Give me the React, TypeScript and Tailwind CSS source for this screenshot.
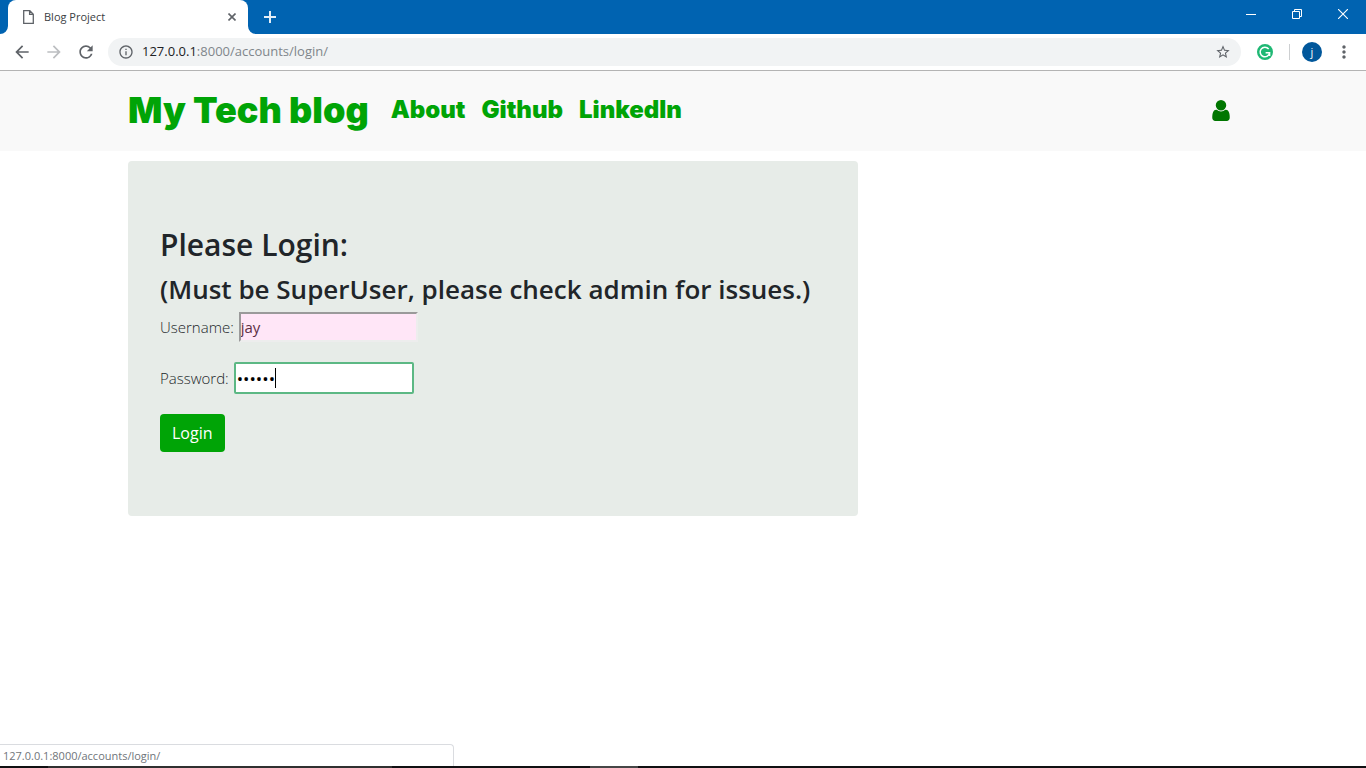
import type { ReactNode } from "react";
import {
  MdArrowBack,
  MdArrowForward,
  MdInfoOutline,
  MdMoreVert,
  MdRefresh,
  MdStarBorder,
} from "react-icons/md";

const links = ["About", "Github", "LinkedIn"];

function WindowButton({ label, children }: { label: string; children: ReactNode }) {
  return (
    <button aria-label={label} className="flex h-7 w-[46px] items-center justify-center text-white">
      {children}
    </button>
  );
}

function TabFlare({ flip = false }: { flip?: boolean }) {
  return (
    <svg viewBox="0 0 8 8" className={flip ? "size-2 -scale-x-100 fill-white" : "size-2 fill-white"}>
      <path d="M8 0V8H0A8 8 0 0 0 8 0Z" />
    </svg>
  );
}

function TitleBar() {
  return (
    <div className="flex h-[34px] bg-[#0063b1]">
      <div className="flex items-end">
        <TabFlare />
        <div className="flex h-full w-60 items-center rounded-t-lg bg-white pr-2.5 pl-[15px]">
          <svg viewBox="0 0 11 14" className="h-3.5 w-[11px] fill-none stroke-[#5f6368] stroke-[1.3]">
            <path d="M.7.7H6.8L10.3 4.2V13.3H.7ZM6.6.7V4.4H10.3" />
          </svg>
          <span className="ml-2.5 grow text-[11px] text-[#3c4043]">Blog Project</span>
          <button aria-label="Close tab" className="flex size-3 items-center justify-center">
            <svg viewBox="0 0 8 8" className="size-2 stroke-[#5f6368] stroke-[1.6]">
              <path d="M.5.5 7.5 7.5M7.5.5.5 7.5" />
            </svg>
          </button>
        </div>
        <TabFlare flip />
      </div>
      <button aria-label="New tab" className="flex w-7 items-center justify-center">
        <svg viewBox="0 0 12 12" className="size-3 stroke-[#e4eef7] stroke-2">
          <path d="M6 0V12M0 6H12" />
        </svg>
      </button>
      <div className="ml-auto flex">
        <WindowButton label="Minimize">
          <svg viewBox="0 0 10 10" className="size-2.5 fill-current">
            <path d="M0 5H10V6H0Z" />
          </svg>
        </WindowButton>
        <WindowButton label="Restore">
          <svg viewBox="0 0 10 10" className="size-2.5 fill-none stroke-current">
            <path d="M.5 2.5H7.5V9.5H.5ZM2.5 2.5V.5H9.5V7.5H7.5" />
          </svg>
        </WindowButton>
        <WindowButton label="Close">
          <svg viewBox="0 0 10 10" className="size-2.5 stroke-current stroke-[1.1]">
            <path d="M0 0 10 10M10 0 0 10" />
          </svg>
        </WindowButton>
      </div>
    </div>
  );
}

function Toolbar() {
  return (
    <div className="flex h-[37px] items-center border-b border-[#b4b4b4] bg-white px-3 text-[#5f6368]">
      <button aria-label="Back">
        <MdArrowBack className="size-5" />
      </button>
      <button aria-label="Forward" className="ml-3 text-[#bcbec1]">
        <MdArrowForward className="size-5" />
      </button>
      <button aria-label="Reload" className="ml-3">
        <MdRefresh className="size-5" />
      </button>
      <div className="ml-3 flex h-7 grow items-center rounded-full bg-[#f1f3f4] px-2.5">
        <MdInfoOutline className="size-4" />
        <span className="ml-2 grow text-[13px] text-[#80868b]">
          <span className="text-[#202124]">127.0.0.1</span>:8000/accounts/login/
        </span>
        <button aria-label="Bookmark this page">
          <MdStarBorder className="size-4" />
        </button>
      </div>
      <button aria-label="Grammarly" className="ml-4">
        <svg viewBox="0 0 16 16" className="size-4">
          <circle cx="8" cy="8" r="8" fill="#1fb874" />
          <path
            d="M11.7 5A4.8 4.8 0 1 0 12.7 8.6M8.6 8.7H12.6V12"
            fill="none"
            stroke="#fff"
            strokeWidth="1.5"
          />
        </svg>
      </button>
      <div className="ml-4 h-4 w-px bg-[#cdcfd1]" />
      <button
        aria-label="Profile"
        className="ml-3 flex size-5 items-center justify-center rounded-full bg-[#01579b] text-[11px] text-white"
      >
        j
      </button>
      <button aria-label="Menu" className="ml-3">
        <MdMoreVert className="size-5" />
      </button>
    </div>
  );
}

function SiteHeader() {
  return (
    <header className="bg-[#f9f9f9]">
      <div className="mx-auto flex h-20 max-w-[1110px] items-center pb-0.5 font-[Inter,sans-serif] font-black text-[#00a406]">
        <a href="#home" className="text-4xl leading-none">
          My Tech blog
        </a>
        <nav className="ml-[22px] flex gap-4 text-2xl leading-none">
          {links.map((link) => (
            <a key={link} href={`#${link.toLowerCase()}`}>
              {link}
            </a>
          ))}
        </nav>
        <a href="#account" aria-label="Account" className="mr-2 ml-auto">
          <svg viewBox="0 128 1280 1536" className="block h-[21px] w-[18px] fill-[#007600]">
            <path d="M1280 1399q0 109-62.5 187t-150.5 78h-854q-88 0-150.5-78t-62.5-187q0-85 8.5-160.5t31.5-152 58.5-131 94-89 134.5-34.5q131 128 313 128t313-128q76 0 134.5 34.5t94 89 58.5 131 31.5 152 8.5 160.5zm-256-887q0 159-112.5 271.5t-271.5 112.5-271.5-112.5-112.5-271.5 112.5-271.5 271.5-112.5 271.5 112.5 112.5 271.5z" />
          </svg>
        </a>
      </div>
    </header>
  );
}

function LoginCard() {
  return (
    <section className="max-w-[730px] rounded bg-[#e7ece8] px-8 py-16 text-[#212529]">
      <h2 className="text-3xl leading-10 font-semibold">Please Login:</h2>
      <h3 className="mt-1 text-[26px] leading-10 font-semibold">
        (Must be SuperUser, please check admin for issues.)
      </h3>
      <form className="mt-[3px] text-[15px] font-light">
        <div className="flex h-[30px] items-center gap-[5px]">
          <label htmlFor="username">Username:</label>
          <input
            id="username"
            type="text"
            defaultValue="jay"
            className="h-[30px] w-[179px] border-2 border-t-[#9a9a9a] border-r-[#ededed] border-b-[#ededed] border-l-[#9a9a9a] bg-[#ffe6f7] font-normal text-[#5e2f45] outline-none"
          />
        </div>
        <div className="mt-5 flex h-8 items-center gap-[5px]">
          <label htmlFor="password">Password:</label>
          <div className="relative">
            <input
              id="password"
              type="password"
              defaultValue="secret"
              className="block h-8 w-[180px] rounded-[2px] border-2 border-[#5cb884] bg-white px-px text-[17px] font-normal text-black caret-transparent outline-none"
            />
            <span className="absolute top-1.5 left-[41px] h-5 w-px bg-black" />
          </div>
        </div>
        <button
          type="button"
          className="mt-5 h-[38px] rounded bg-[#00a406] px-3 text-base font-normal text-white"
        >
          Login
        </button>
      </form>
    </section>
  );
}

export default function App() {
  return (
    <div className="relative flex min-h-screen flex-col bg-white font-['Open_Sans',sans-serif]">
      <TitleBar />
      <Toolbar />
      <SiteHeader />
      <main className="mx-auto w-full max-w-[1110px] grow pt-2.5">
        <LoginCard />
      </main>
      <div className="absolute bottom-0.5 left-0 h-[22px] w-[454px] rounded-tr border-t border-r border-[#dadce0] bg-white pl-[3px] text-[11px] leading-[22px] text-[#70757a]">
        127.0.0.1:8000/accounts/login/
      </div>
      <div className="flex h-0.5 bg-[#101012]">
        <div className="ml-12 w-[344px] bg-[#303030]" />
        <div className="ml-[198px] w-12 bg-[#464646]" />
      </div>
    </div>
  );
}
